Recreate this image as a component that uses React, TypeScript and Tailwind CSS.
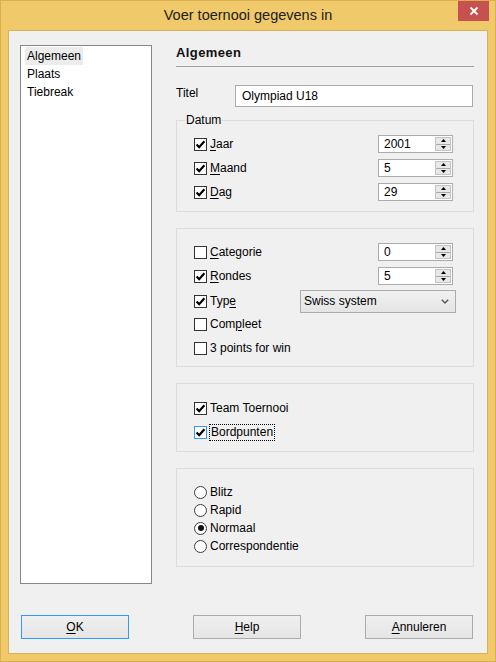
import React from "react";

const font = { fontFamily: '"Liberation Sans", Arial, sans-serif' };

function Check({ checked, focus }: { checked?: boolean; focus?: boolean }) {
  return (
    <span
      className={
        focus
          ? "w-[13px] h-[13px] border border-[#3399ff] bg-white flex items-center justify-center shrink-0"
          : "w-[13px] h-[13px] border border-[#333333] bg-white flex items-center justify-center shrink-0"
      }
    >
      {checked && (
        <svg width="11" height="11" viewBox="0 0 11 11">
          <path d="M1.6 5.4 L4.2 8.2 L9.4 2.2" stroke="#000" strokeWidth="2.2" fill="none" />
        </svg>
      )}
    </span>
  );
}

function Radio({ checked }: { checked?: boolean }) {
  return (
    <span className="w-[13px] h-[13px] rounded-full border border-[#3c3c3c] bg-white flex items-center justify-center shrink-0">
      {checked && <span className="w-[6px] h-[6px] rounded-full bg-[#111]" />}
    </span>
  );
}

function Spin({ value }: { value: string }) {
  return (
    <div className="w-[75px] h-[18px] border border-[#acacac] bg-white flex mr-[20px]">
      <div className="flex-1 pl-[5px] leading-[16px] text-black">{value}</div>
      <div className="w-[16px] my-[1px] mr-[1px] flex flex-col bg-[#e8e8e8] border border-[#c4c4c4]">
        <div className="flex-1 flex items-center justify-center border-b border-[#a8a8a8]">
          <svg width="5" height="3" viewBox="0 0 5 3">
            <path d="M0 3 L2.5 0 L5 3 Z" fill="#000" />
          </svg>
        </div>
        <div className="flex-1 flex items-center justify-center">
          <svg width="5" height="3" viewBox="0 0 5 3">
            <path d="M0 0 L2.5 3 L5 0 Z" fill="#000" />
          </svg>
        </div>
      </div>
    </div>
  );
}

function CheckRow({
  label,
  checked,
  focus,
  children,
}: {
  label: React.ReactNode;
  checked?: boolean;
  focus?: boolean;
  children?: React.ReactNode;
}) {
  return (
    <div className="h-[24px] flex items-center">
      <div className="flex-1 flex items-center">
        <Check checked={checked} focus={focus} />
        <span
          className={
            focus
              ? "ml-[2px] px-[1px] leading-[15px] border border-dotted border-black"
              : "ml-[3px] leading-[15px]"
          }
        >
          {label}
        </span>
      </div>
      {children}
    </div>
  );
}

function RadioRow({ label, checked }: { label: string; checked?: boolean }) {
  return (
    <div className="h-[18px] flex items-center">
      <Radio checked={checked} />
      <span className="ml-[3px] leading-[15px]">{label}</span>
    </div>
  );
}

function Btn({ children, focus }: { children: React.ReactNode; focus?: boolean }) {
  return (
    <div
      className={
        focus
          ? "w-[108px] h-[24px] border border-[#3399ff] bg-gradient-to-b from-[#f0f0f0] to-[#e5e5e5] flex items-center justify-center text-black"
          : "w-[108px] h-[24px] border border-[#acacac] bg-gradient-to-b from-[#f0f0f0] to-[#e5e5e5] flex items-center justify-center text-black"
      }
    >
      {children}
    </div>
  );
}

const U = ({ c }: { c: string }) => <u className="underline underline-offset-2">{c}</u>;

export default function App() {
  return (
    <div
      className="w-[496px] h-[662px] bg-[#f0c96b] border border-[#dcae4e] flex flex-col text-[12px] text-black"
      style={font}
    >
      <div className="h-[29px] relative flex items-center justify-center">
        <span className="text-[14.5px] text-[#202020] pt-[1px]">Voer toernooi gegevens in</span>
        <div className="absolute top-0 right-[6px] w-[31px] h-[20px] bg-[#c75050] flex items-center justify-center">
          <svg width="10" height="10" viewBox="0 0 10 10">
            <path d="M1.5 1.5 L8.5 8.5 M8.5 1.5 L1.5 8.5" stroke="#fff" strokeWidth="1.8" />
          </svg>
        </div>
      </div>
      <div className="flex-1 mx-[7px] mb-[7px] bg-[#f0f0f0] border border-[#d9b15a] flex flex-col pt-[14px] px-[11px]">
        <div className="flex">
          <div className="w-[132px] h-[539px] bg-white border border-[#828790] pt-[1px] pl-[4px] flex flex-col items-start">
            <div className="h-[18px] leading-[18px] px-[2px] bg-[#ececec]">Algemeen</div>
            <div className="h-[18px] leading-[18px] px-[2px]">Plaats</div>
            <div className="h-[18px] leading-[18px] px-[2px]">Tiebreak</div>
          </div>
          <div className="ml-[24px] w-[298px] flex flex-col">
            <div className="leading-[16px] pb-[5px] border-b border-[#a0a0a0] font-bold text-[13px] tracking-[0.4px] text-[#111]">
              Algemeen
            </div>
            <div className="mt-[18px] flex items-start">
              <span className="w-[59px] leading-[16px]">Titel</span>
              <div className="w-[238px] h-[22px] border border-[#acacac] bg-white pl-[6px] leading-[20px]">
                Olympiad U18
              </div>
            </div>
            <fieldset className="mt-[5px] border border-[#dcdcdc] pl-[17px] pt-[4px] pb-[7px]">
              <legend className="ml-[-9px] px-[1px] leading-[16px]">Datum</legend>
              <CheckRow checked label={<><U c="J" />aar</>}>
                <Spin value="2001" />
              </CheckRow>
              <CheckRow checked label={<><U c="M" />aand</>}>
                <Spin value="5" />
              </CheckRow>
              <CheckRow checked label={<><U c="D" />ag</>}>
                <Spin value="29" />
              </CheckRow>
            </fieldset>
            <div className="mt-[16px] border border-[#dcdcdc] pl-[17px] pt-[11px] pb-[6px]">
              <CheckRow label={<><U c="C" />ategorie</>}>
                <Spin value="0" />
              </CheckRow>
              <CheckRow checked label={<><U c="R" />ondes</>}>
                <Spin value="5" />
              </CheckRow>
              <div className="h-[24px] flex items-center pt-[2px]">
                <div className="w-[106px] flex items-center">
                  <Check checked />
                  <span className="ml-[3px] leading-[15px]">
                    Typ<U c="e" />
                  </span>
                </div>
                <div className="w-[156px] h-[23px] border border-[#acacac] bg-gradient-to-b from-[#f0f0f0] to-[#e5e5e5] flex items-center pl-[3px] pr-[6px]">
                  <span className="flex-1">Swiss system</span>
                  <svg width="8" height="5" viewBox="0 0 8 5">
                    <path d="M0.8 0.8 L4 4 L7.2 0.8" stroke="#555" strokeWidth="1.4" fill="none" />
                  </svg>
                </div>
              </div>
              <CheckRow label={<>Com<U c="p" />leet</>} />
              <CheckRow label="3 points for win" />
            </div>
            <div className="mt-[16px] border border-[#dcdcdc] pl-[17px] pt-[12px] pb-[7px]">
              <CheckRow checked label="Team Toernooi" />
              <CheckRow checked focus label="Bordpunten" />
            </div>
            <div className="mt-[16px] border border-[#dcdcdc] pl-[17px] pt-[14px] pb-[11px]">
              <RadioRow label="Blitz" />
              <RadioRow label="Rapid" />
              <RadioRow label="Normaal" checked />
              <RadioRow label="Correspondentie" />
            </div>
          </div>
        </div>
        <div className="mt-[31px] pl-[1px] pr-[3px] flex justify-between">
          <Btn focus>
            <U c="O" />K
          </Btn>
          <Btn>
            <U c="H" />elp
          </Btn>
          <Btn>
            <U c="A" />nnuleren
          </Btn>
        </div>
      </div>
    </div>
  );
}
